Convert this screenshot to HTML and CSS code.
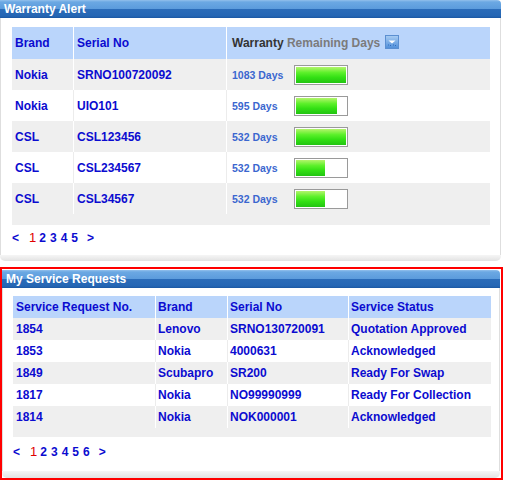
FILE: index.html
```
<!DOCTYPE html>
<html>
<head>
<meta charset="utf-8">
<link rel="stylesheet" href="styles.css">
</head>
<body>
<div class="panel top-panel">
  <div class="phead">Warranty Alert</div>
  <div class="pbody">
    <table class="grid wgrid">
      <thead>
        <tr>
          <th class="c1">Brand</th>
          <th class="c2">Serial No</th>
          <th class="c3"><span class="w">Warranty</span> <span class="rd">Remaining Days</span><svg class="dd" width="14" height="14" viewBox="0 0 14 14"><defs><linearGradient id="g" x1="0" y1="0" x2="0" y2="1"><stop offset="0" stop-color="#a9cdf3"/><stop offset="1" stop-color="#4f8ed9"/></linearGradient></defs><rect x="0.5" y="0.5" width="13" height="13" fill="url(#g)" stroke="#5b8fd1"/><path d="M3.5 5.5 H10.5 L7 8.5 Z" fill="#ffffff"/><path d="M3 10 h1 M5 10.5 h1 M8 10 h1 M10 10.5 h1" stroke="#2f6cc0" stroke-width="1"/></svg></th>
        </tr>
      </thead>
      <tbody>
        <tr class="odd"><td>Nokia</td><td>SRNO100720092</td><td><span class="days">1083 Days</span><span class="bar"><span class="fill" style="width:50px"></span></span></td></tr>
        <tr class="even"><td>Nokia</td><td>UIO101</td><td><span class="days">595 Days</span><span class="bar"><span class="fill" style="width:41px"></span></span></td></tr>
        <tr class="odd"><td>CSL</td><td>CSL123456</td><td><span class="days">532 Days</span><span class="bar"><span class="fill" style="width:50px"></span></span></td></tr>
        <tr class="even"><td>CSL</td><td>CSL234567</td><td><span class="days">532 Days</span><span class="bar"><span class="fill" style="width:29px"></span></span></td></tr>
        <tr class="odd"><td>CSL</td><td>CSL34567</td><td><span class="days">532 Days</span><span class="bar"><span class="fill" style="width:29px"></span></span></td></tr>
        <tr class="pad"><td colspan="3"></td></tr>
      </tbody>
    </table>
    <div class="pager"><span class="nav">&lt;</span><span class="cur">1</span><span class="pg">2</span><span class="pg">3</span><span class="pg">4</span><span class="pg">5</span><span class="nav next">&gt;</span></div>
  </div>
  <div class="pfoot"></div>
</div>

<div class="redbox">
  <div class="panel sr-panel">
    <div class="phead">My Service Requests</div>
    <div class="pbody">
      <table class="grid sgrid">
        <thead>
          <tr>
            <th class="s1">Service Request No.</th>
            <th class="s2">Brand</th>
            <th class="s3">Serial No</th>
            <th class="s4">Service Status</th>
          </tr>
        </thead>
        <tbody>
          <tr class="odd"><td>1854</td><td>Lenovo</td><td>SRNO130720091</td><td>Quotation Approved</td></tr>
          <tr class="even"><td>1853</td><td>Nokia</td><td>4000631</td><td>Acknowledged</td></tr>
          <tr class="odd"><td>1849</td><td>Scubapro</td><td>SR200</td><td>Ready For Swap</td></tr>
          <tr class="even"><td>1817</td><td>Nokia</td><td>NO99990999</td><td>Ready For Collection</td></tr>
          <tr class="odd"><td>1814</td><td>Nokia</td><td>NOK000001</td><td>Acknowledged</td></tr>
          <tr class="pad"><td colspan="4"></td></tr>
        </tbody>
      </table>
      <div class="pager"><span class="nav">&lt;</span><span class="cur">1</span><span class="pg">2</span><span class="pg">3</span><span class="pg">4</span><span class="pg">5</span><span class="pg">6</span><span class="nav next">&gt;</span></div>
    </div>
    <div class="pfoot"></div>
  </div>
</div>
</body>
</html>
```
FILE: styles.css
```
html, body {
  margin: 0;
  padding: 0;
  background: #ffffff;
}
body {
  font-family: "Liberation Sans", Arial, sans-serif;
  font-size: 12px;
  width: 506px;
}
.panel {
  width: 501px;
  box-sizing: border-box;
}
.phead {
  height: 18px;
  line-height: 18px;
  padding-left: 4px;
  color: #ffffff;
  font-weight: bold;
  font-size: 12px;
  border-radius: 0 4px 0 0;
  background: linear-gradient(#93c0ec 0px, #6ba8e3 2px, #5b9bdc 9px, #2b6cb9 9px, #2566b4 16px, #1b57a3 18px);
}
.pbody {
  border-left: 1px solid #dedede;
  border-right: 1px solid #dedede;
  padding: 9px 0 10px 11px;
}
.pfoot {
  height: 6px;
  border-radius: 0 0 5px 5px;
  background: linear-gradient(#f6f6f6, #e2e2e2);
}
.grid {
  width: 478px;
  table-layout: fixed;
  border-collapse: separate;
  border-spacing: 0;
  background: #efefef;
  color: #0b0bd0;
  font-weight: bold;
  font-size: 12px;
}
.grid th, .grid td {
  box-sizing: border-box;
  padding: 0 0 0 3px;
  text-align: left;
  vertical-align: middle;
  white-space: nowrap;
}
.grid th {
  background: #bad5fb;
  font-weight: bold;
}
.grid th + th, .grid td + td {
  border-left: 1px solid #ffffff;
}
.grid tr.odd td {
  background: #efefef;
}
.grid tr.even td {
  background: #ffffff;
}
.grid tr.even td + td {
  border-left: 1px solid #ececec;
}
.grid tr.pad td {
  background: #efefef;
  padding: 0;
}
.wgrid th { height: 32px; }
.wgrid td { height: 31px; }
.wgrid tr.pad td { height: 11px; }
.wgrid .c1 { width: 61px; }
.wgrid .c2 { width: 153px; }
.wgrid .c3 { width: 264px; }
.wgrid td:nth-child(3), .wgrid th.c3 { padding-left: 5px; }
.w { color: #333333; }
.rd { color: #7b7b7b; }
.dd {
  vertical-align: middle;
  margin-left: 5px;
  position: relative;
  top: -1px;
}
.days {
  display: inline-block;
  width: 62px;
  font-size: 10.5px;
  color: #3b67cf;
  vertical-align: middle;
}
.bar {
  display: inline-block;
  vertical-align: middle;
  width: 54px;
  height: 20px;
  box-sizing: border-box;
  border: 1px solid #9a9a9a;
  padding: 1px;
  background: #ffffff;
}
.fill {
  display: block;
  height: 16px;
  background: linear-gradient(#b4f46c 0%, #5cf02a 35%, #33e014 65%, #22c412 100%);
}
.pager {
  margin-top: 6px;
  height: 14px;
  line-height: 14px;
  font-weight: bold;
  font-size: 12px;
  color: #0b0bd0;
}
.pager .nav { margin-right: 10px; }
.pager .next { margin-left: 5px; margin-right: 0; }
.pager .cur {
  color: #e00000;
  font-weight: normal;
  font-size: 13px;
  margin-right: 3px;
}
.pager .pg { margin-right: 4px; }

.redbox {
  margin-top: 6px;
  width: 503px;
  box-sizing: border-box;
  border: 2px solid #ff0000;
  padding-top: 1px;
}
.sr-panel { width: 498px; }
.sr-panel .pbody {
  padding: 8px 0 12px 10px;
}
.sr-panel .pfoot { height: 7px; }
.sr-panel .pager { margin-top: 8px; }
.sgrid th { height: 22px; }
.sgrid td { height: 22px; }
.sgrid tr.pad td { height: 9px; }
.sgrid .s1 { width: 142px; }
.sgrid .s2 { width: 72px; }
.sgrid .s3 { width: 121px; }
.sgrid .s4 { width: 143px; }
.sgrid th + th, .sgrid td + td { padding-left: 2px; }
```
